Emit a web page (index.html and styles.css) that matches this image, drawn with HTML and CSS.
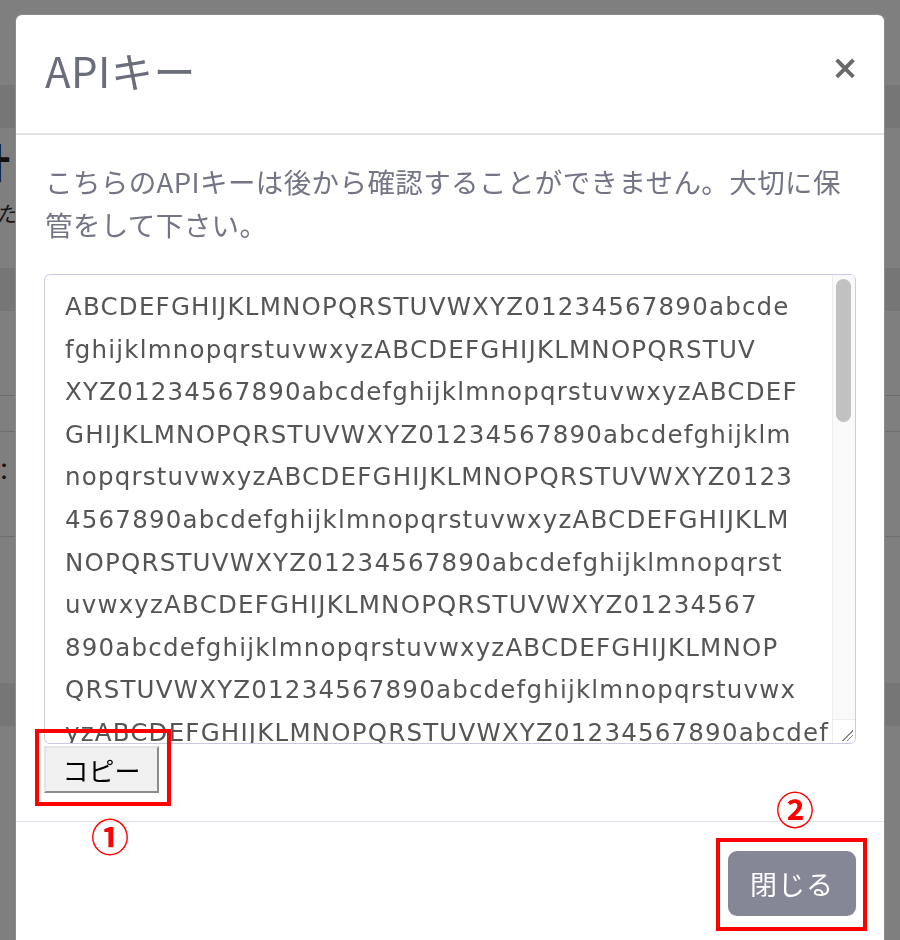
FILE: index.html
```html
<!DOCTYPE html>
<html lang="ja">
<head>
  <meta charset="UTF-8" />
  <meta name="viewport" content="width=device-width, initial-scale=1.0" />
  <title>APIキー</title>
  <link rel="stylesheet" href="styles.css">
</head>
<body>
  <div class="page">
    <div class="page-top"></div>
    <div class="page-band"></div>
    <div class="page-head">
      <h2>集計</h2>
      <p>まだデータがありません</p>
    </div>
    <div class="page-band"></div>
    <div class="page-row"></div>
    <div class="page-row gap"></div>
    <div class="page-row"><span>：</span></div>
    <div class="page-row tall"></div>
    <div class="page-band"></div>
  </div>

  <div class="overlay">
    <div class="modal">
      <div class="modal-header">
        <h3 class="modal-title">APIキー</h3>
        <button class="close">×</button>
      </div>

      <div class="modal-body">
        <p class="notice">こちらのAPIキーは後から確認することができません。大切に保管をして下さい。</p>
        <div class="key-wrap">
          <textarea class="key" readonly>ABCDEFGHIJKLMNOPQRSTUVWXYZ01234567890abcde
fghijklmnopqrstuvwxyzABCDEFGHIJKLMNOPQRSTUV
XYZ01234567890abcdefghijklmnopqrstuvwxyzABCDEF
GHIJKLMNOPQRSTUVWXYZ01234567890abcdefghijklm
nopqrstuvwxyzABCDEFGHIJKLMNOPQRSTUVWXYZ0123
4567890abcdefghijklmnopqrstuvwxyzABCDEFGHIJKLM
NOPQRSTUVWXYZ01234567890abcdefghijklmnopqrst
uvwxyzABCDEFGHIJKLMNOPQRSTUVWXYZ01234567
890abcdefghijklmnopqrstuvwxyzABCDEFGHIJKLMNOP
QRSTUVWXYZ01234567890abcdefghijklmnopqrstuvwx
yzABCDEFGHIJKLMNOPQRSTUVWXYZ01234567890abcdef
ghijklmnopqrstuvwxyz</textarea>
          <!-- スクロールバー -->
          <div class="scroll-track"><div class="scroll-thumb"></div></div>
          <div class="scroll-corner"></div>
        </div>
        <button class="copy">コピー</button>
      </div>

      <div class="modal-footer">
        <button class="btn-close">閉じる</button>
      </div>

      <!-- 注釈 -->
      <div class="mark mark-copy"></div>
      <span class="num num-copy">①</span>
      <div class="mark mark-close"></div>
      <span class="num num-close">②</span>
    </div>
  </div>
</body>
</html>
```

FILE: styles.css
```css
body {
  margin: 0;
  font-family: "Noto Sans CJK JP", sans-serif;
  background-color: #fff;
  overflow: hidden;
  height: 940px;
}
.page {
  background: #fff;
}
.page-top {
  height: 85px;
}
.page-band {
  height: 43px;
  background: #ececec;
}
.page-head {
  height: 132px;
  margin-left: -70px;
  padding-top: 8px;
}
.page-head h2 {
  margin: 0;
  font-size: 40px;
  line-height: 50px;
  color: #222;
}
.page-head p {
  margin: 10px 0 0 44px;
  font-size: 22px;
  font-style: italic;
  color: #333;
}
.page-row {
  height: 84px;
  border-bottom: 1px solid #d8d8d8;
}
.page-row.gap {
  height: 35px;
}
.page-row span {
  display: block;
  margin: 20px 0 0 -8px;
  font-size: 24px;
  color: #222;
}
.page-row.tall {
  height: 146px;
  border-bottom: none;
}

.overlay {
  position: fixed;
  inset: 0;
  background: rgba(0, 0, 0, 0.5);
  padding: 14px 15px 0;
}
.modal {
  position: relative;
  background: #fff;
  border: 1px solid rgba(0, 0, 0, 0.45);
  border-radius: 7px;
  height: 1000px;
}
.modal-header {
  display: flex;
  align-items: center;
  justify-content: space-between;
  box-sizing: border-box;
  height: 120px;
  padding: 0 29px 10px 29px;
  border-bottom: 2px solid #e1e4ef;
}
.modal-title {
  margin: 0;
  font-size: 42px;
  font-weight: 400;
  color: #6b6d7d;
  letter-spacing: 0.5px;
}
.close {
  border: none;
  background: none;
  padding: 0;
  font-family: "DejaVu Sans", sans-serif;
  font-size: 33px;
  font-weight: bold;
  line-height: 1;
  color: #6a6a6a;
  margin: -4px -4px 0 0;
}
.modal-body {
  padding: 25px 29px 28px 29px;
  border-bottom: 1px solid #dfe2ec;
}
.notice {
  margin: 0 0 28px;
  font-size: 27.5px;
  line-height: 43px;
  color: #737585;
  letter-spacing: 0.4px;
}
.key-wrap {
  position: relative;
  width: 812px;
  margin-left: -1px;
}
.key {
  display: block;
  box-sizing: border-box;
  width: 812px;
  height: 470px;
  padding: 11px 20px 9px;
  border: 1px solid #c9cbe0;
  border-radius: 6px;
  font-family: "DejaVu Sans", Verdana, sans-serif;
  font-size: 24.5px;
  letter-spacing: 1.2px;
  line-height: 42.6px;
  color: #555;
  white-space: pre;
  overflow: hidden;
  resize: none;
  outline: none;
}
.scroll-track {
  position: absolute;
  top: 1px;
  right: 1px;
  bottom: 25px;
  width: 22px;
  background: #f9f9f9;
  border-left: 1px solid #ededed;
  border-top-right-radius: 5px;
}
.scroll-thumb {
  margin: 4px 0 0 3px;
  width: 15px;
  height: 143px;
  border-radius: 8px;
  background: #c1c1c1;
}
.scroll-corner {
  position: absolute;
  right: 1px;
  bottom: 1px;
  width: 22px;
  height: 23px;
  border-left: 1px solid #ededed;
  border-top: 1px solid #ededed;
  border-bottom-right-radius: 5px;
  background:
    linear-gradient(135deg, transparent 60%, #888 60%, #888 66%, transparent 66%, transparent 76%, #888 76%, #888 82%, transparent 82%) no-repeat right 2px bottom 2px / 14px 14px,
    #fff;
}
.copy {
  display: block;
  margin: 2px 0 0 -1px;
  width: 115px;
  height: 47px;
  padding: 0;
  background: #f0f0f0;
  border: 2px solid;
  border-color: #e4e4e4 #8c8c8c #8c8c8c #e4e4e4;
  font-family: "Noto Sans CJK JP", sans-serif;
  font-size: 26px;
  color: #000;
}
.modal-footer {
  display: flex;
  justify-content: flex-end;
  padding: 29px 28px;
}
.btn-close {
  width: 128px;
  height: 65px;
  border: none;
  border-radius: 9px;
  background: #858797;
  color: #fff;
  font-family: "Noto Sans CJK JP", sans-serif;
  font-size: 27px;
  letter-spacing: 1px;
}

.mark {
  position: absolute;
  box-sizing: border-box;
  border: 4px solid #f00;
}
.mark-copy {
  left: 19px;
  top: 714px;
  width: 136px;
  height: 77px;
}
.mark-close {
  left: 700px;
  top: 823px;
  width: 151px;
  height: 93px;
}
.num {
  position: absolute;
  width: 50px;
  text-align: center;
  font-size: 38px;
  line-height: 40px;
  font-weight: bold;
  color: #f00;
}
.num-copy {
  left: 69px;
  top: 800px;
}
.num-close {
  left: 754px;
  top: 773px;
}
```
